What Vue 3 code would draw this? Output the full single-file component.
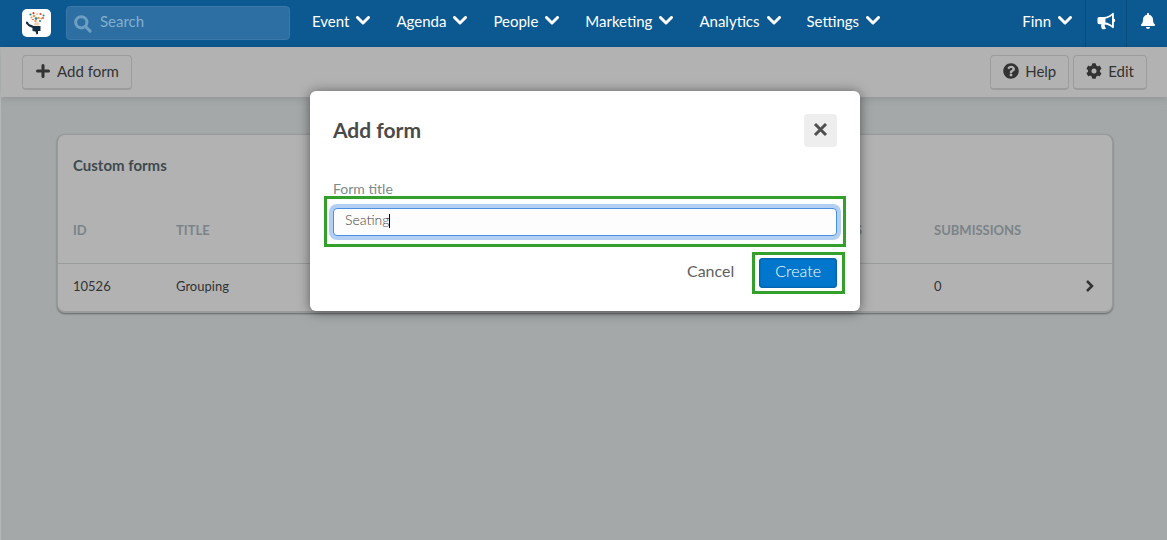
<script setup>
import { ref } from 'vue'

const menus = ['Event', 'Agenda', 'People', 'Marketing', 'Analytics', 'Settings']
const forms = [{ id: 10526, title: 'Grouping', questions: 4, submissions: 0 }]
const title = ref('Seating')
</script>

<template>
  <div class="page">
    <header class="topbar">
      <a class="logo" href="#" aria-label="Home">
        <svg viewBox="0 0 29 28">
          <path d="M10.500 17h8v5h-2.500v3l-1.500.5-1-3-3-.5z" fill="#142d40" />
          <path d="M4 12.500l2 .5 1 2 5 2v2.500l-5-2-3-3z" fill="#142d40" />
          <path d="M12 16.500v-2l3-1.500 2.500 1-.5 2.500z" fill="#ecd3b4" />
          <g fill="#ea9a50"><circle cx="12" cy="7" r="1.3" /><circle cx="16.500" cy="9" r="1.3" /><circle cx="13.500" cy="12" r="1.2" /><circle cx="19.500" cy="9.500" r="1.1" /><circle cx="9.500" cy="8.500" r="1" /><circle cx="15" cy="5" r=".8" /></g>
          <g fill="#1f8580"><circle cx="8.500" cy="5.500" r="1.1" /><circle cx="14" cy="9.500" r="1.3" /><circle cx="18" cy="12" r="1" /><circle cx="21.500" cy="6.500" r="1" /></g>
          <g fill="#d94333"><circle cx="11.500" cy="4.200" r="1.1" /><circle cx="18.500" cy="5" r="1.1" /><circle cx="21" cy="9" r=".9" /><circle cx="11" cy="10.500" r=".8" /></g>
        </svg>
      </a>
      <label class="search">
        <svg viewBox="0 0 18 18" aria-hidden="true"><circle cx="7.300" cy="7.300" r="5.600" /><path d="M11.500 11.500l4.600 4.600" /></svg>
        <input type="search" placeholder="Search" aria-label="Search" />
      </label>
      <nav class="menus">
        <button v-for="m in menus" :key="m" type="button" class="menu">
          {{ m }}
          <svg class="chev" viewBox="0 0 14 9"><path d="M1.5 1.5L7 7l5.5-5.5" /></svg>
        </button>
      </nav>
      <div class="account">
        <button type="button" class="menu user">
          Finn
          <svg class="chev" viewBox="0 0 14 9"><path d="M1.5 1.5L7 7l5.5-5.5" /></svg>
        </button>
        <button type="button" class="tool" aria-label="Announcements">
          <svg width="20" height="18" viewBox="0 0 18 16">
            <path fill="#fff" fill-rule="evenodd" d="M15.200.5c.6 0 .9.400.9 1v4.300c1.500.500 1.500 3 0 3.500v4.200c0 .6-.3 1-.9 1-2-1.900-4.500-3.100-7.100-3.400-.6.700-.2 1.400.1 1.900-.2.600.3 1.100.9 1.600-.8 1.100-2.900 1.200-3.900.4-.3-1.200-.9-2.400-.4-4H3.100C2 11 1.300 10.200 1.300 9.200V6.100C1.300 5 2 4.300 3.100 4.300h4c2.900 0 5.800-1.500 8.100-3.800zM14.400 3c-1.800 1.500-3.900 2.500-5.900 2.800v3.600c2.100.3 4.100 1.200 5.900 2.700z" />
          </svg>
        </button>
        <button type="button" class="tool" aria-label="Notifications">
          <svg width="14" height="16" viewBox="0 0 448 512"><path fill="#fff" d="M224 512c35 0 64-29 64-64H160c0 35 29 64 64 64zm215-150c-19-20-55-51-55-154 0-77-54-139-128-154V32c0-18-14-32-32-32s-32 14-32 32v22C118 69 64 131 64 208c0 103-36 134-55 154-6 7-9 14-9 22 0 16 13 32 32 32h384c19 0 32-16 32-32 0-8-3-15-9-22z" /></svg>
        </button>
      </div>
    </header>

    <main class="content">
      <div class="toolbar">
        <button type="button" class="btn">
          <svg width="16" height="16" viewBox="0 0 16 16"><path d="M8 2.500v11M2.500 8h11" stroke="#333" stroke-width="3" stroke-linecap="round" /></svg>
          Add form
        </button>
        <span class="spacer"></span>
        <button type="button" class="btn">
          <svg width="16" height="16" viewBox="0 0 512 512"><path fill="#333" d="M504 256c0 137-111 248-248 248S8 393 8 256C8 119 119 8 256 8s248 111 248 248zM263 90c-55 0-89 23-116 64-4 5-3 12 3 16l34 27c6 4 13 3 17-2 18-23 30-36 58-36 20 0 46 13 46 33 0 15-12 23-33 34-23 13-55 30-55 71v7c0 6 6 12 12 12h58c6 0 12-6 12-12v-1c0-29 84-30 84-109 0-58-61-104-120-104zm-7 248c-26 0-46 20-46 46s20 46 46 46 46-20 46-46-20-46-46-46z" /></svg>
          Help
        </button>
        <button type="button" class="btn">
          <svg width="16" height="16" viewBox="0 0 512 512"><path fill="#333" d="M487 316l-42-25c4-23 4-47 0-70l42-25c5-3 8-9 6-14-11-36-30-68-55-95-4-4-10-5-15-3l-43 25c-18-16-38-28-61-36V24c0-6-4-11-9-12-37-8-74-8-109 0-6 1-10 6-10 12v49c-22 8-43 20-61 36L88 84c-5-3-11-2-15 3-25 26-44 59-55 95-2 5 0 11 5 14l43 25c-5 23-5 47 0 70l-43 24c-5 3-7 9-5 15 11 35 30 68 55 95 4 4 10 5 15 2l42-24c18 15 39 27 61 35v49c0 6 4 11 10 12 37 8 74 8 109 0 5-1 9-6 9-12v-49c23-8 43-20 61-35l43 24c5 3 11 2 15-2 25-27 44-60 55-95 1-6-1-12-6-15zM256 336a80 80 0 1 1 0-160 80 80 0 0 1 0 160z" /></svg>
          Edit
        </button>
      </div>

      <section class="card">
        <h2>Custom forms</h2>
        <table>
          <thead>
            <tr>
              <th class="c-id">ID</th>
              <th>TITLE</th>
              <th class="c-questions">QUESTIONS</th>
              <th class="c-submissions">SUBMISSIONS</th>
              <th class="c-go"></th>
            </tr>
          </thead>
          <tbody>
            <tr v-for="f in forms" :key="f.id">
              <td>{{ f.id }}</td>
              <td>{{ f.title }}</td>
              <td>{{ f.questions }}</td>
              <td>{{ f.submissions }}</td>
              <td class="go"><svg width="9" height="12" viewBox="0 0 9 12"><path d="M2 1L7 6l-5 5" /></svg></td>
            </tr>
          </tbody>
        </table>
      </section>
    </main>

    <div class="overlay">
      <form class="modal" role="dialog" aria-labelledby="dialog-title" @submit.prevent>
        <div class="modal-head">
          <h1 id="dialog-title">Add form</h1>
          <button type="button" class="close" aria-label="Close">
            <svg width="15" height="15" viewBox="0 0 15 15"><path d="M2 2l11 11M13 2L2 13" /></svg>
          </button>
        </div>
        <label for="form-title">Form title</label>
        <div class="field marked">
          <input id="form-title" v-model="title" type="text" />
          <span class="caret"></span>
        </div>
        <div class="actions">
          <button type="button" class="cancel">Cancel</button>
          <span class="submit marked"><button type="submit" class="create">Create</button></span>
        </div>
      </form>
    </div>
  </div>
</template>

<style>
body {
  background: #a4a8a9;
}
</style>

<style scoped>
* {
  box-sizing: border-box;
}
.page {
  min-height: 100vh;
  display: flex;
  flex-direction: column;
  font-family: Lato, "Liberation Sans", sans-serif;
  font-size: 15px;
  color: #333;
}
button,
input {
  font: inherit;
  color: inherit;
}
button {
  border: 0;
  padding: 0;
  background: none;
  cursor: pointer;
}
svg {
  display: block;
  flex: none;
}
.topbar {
  height: 47px;
  display: flex;
  align-items: stretch;
  background: #0c5991;
  color: #fff;
  padding: 0 0 2px 22px;
}
.logo {
  align-self: center;
  width: 29px;
  height: 28px;
  border-radius: 5px;
  background: #fff;
}
.search {
  align-self: center;
  width: 224px;
  height: 34px;
  margin-left: 15px;
  padding: 0 7px;
  display: flex;
  align-items: center;
  gap: 8px;
  border: 1px solid #3b78a9;
  border-radius: 4px;
  background: #2d6fa2;
}
.search svg {
  width: 18px;
  height: 18px;
  margin-top: 2px;
  fill: none;
  stroke: #6f9fc3;
  stroke-width: 3;
  stroke-linecap: round;
}
.search input {
  flex: 1;
  min-width: 0;
  padding: 0 0 3px;
  border: 0;
  outline: 0;
  background: none;
}
.search input::placeholder {
  color: #84aece;
  opacity: 1;
}
.menus {
  display: flex;
  gap: 26px;
  margin-left: 22px;
}
.menu {
  display: flex;
  align-items: center;
  gap: 7px;
  padding-bottom: 4px;
}
.chev {
  width: 14px;
  height: 9px;
  fill: none;
  stroke: #fff;
  stroke-width: 3;
  stroke-linecap: round;
  stroke-linejoin: round;
}
.account {
  display: flex;
  margin: 0 -2px -2px auto;
}
.user {
  padding: 0 13px 6px 0;
}
.tool {
  width: 41px;
  display: flex;
  align-items: center;
  justify-content: center;
  padding-bottom: 5px;
  border-left: 1px solid #0a4c7c;
}
.tool:last-child {
  width: 43px;
}
.content {
  flex: 1;
  border-left: 1px solid #b5b8b9;
  background: #a4a8a9;
}
.toolbar {
  height: 50px;
  display: flex;
  align-items: center;
  gap: 4px;
  padding: 0 20px 0 21px;
  background: #b2b2b2;
  box-shadow: 0 1px 8px rgba(0, 0, 0, 0.14);
}
.spacer {
  flex: 1;
}
.btn {
  height: 35px;
  display: flex;
  align-items: center;
  gap: 6px;
  padding: 0 12px 2px;
  border: 1px solid #9c9c9c;
  border-bottom-width: 2px;
  border-radius: 4px;
}
.card {
  margin: 37px 54px 0 56px;
  border: 1px solid #989b9c;
  border-bottom: 2px solid #9a9c9c;
  border-radius: 8px;
  background: #b2b2b2;
  box-shadow: 0 1px 2px rgba(0, 0, 0, 0.4);
}
h2 {
  margin: 0;
  padding: 20px 15px 0;
  font-size: 15px;
  line-height: 20px;
  font-weight: 700;
  color: #3f4a50;
}
table {
  width: 100%;
  table-layout: fixed;
  border-collapse: collapse;
  margin-top: 21px;
  font-size: 13px;
}
th,
td {
  padding: 0 15px;
  text-align: left;
}
th {
  height: 67px;
  padding-top: 2px;
  color: #7a8488;
  font-weight: 700;
  border-bottom: 1px solid #999c9d;
}
td {
  height: 48px;
  padding-bottom: 2px;
}
.c-id {
  width: 103px;
}
.c-questions {
  width: 146px;
}
.c-submissions {
  width: 151px;
}
.c-go {
  width: 42px;
}
.go svg {
  fill: none;
  stroke: #333;
  stroke-width: 2.5;
}
.overlay {
  position: absolute;
  inset: 0;
  padding: 91px 0 0 3px;
}
.modal {
  max-width: 550px;
  margin: 0 auto;
  padding: 23px;
  border-radius: 6px;
  background: #fff;
  box-shadow: 0 1px 12px rgba(0, 0, 0, 0.5);
}
.modal-head {
  display: flex;
  justify-content: space-between;
  align-items: center;
  margin-bottom: 32px;
}
h1 {
  margin: 0;
  padding-bottom: 2px;
  font-size: 21px;
  font-weight: 700;
  color: #4a4a4a;
}
.close {
  width: 33px;
  height: 33px;
  display: flex;
  align-items: center;
  justify-content: center;
  padding-bottom: 2px;
  border-radius: 4px;
  background: #eee;
}
.close svg {
  stroke: #4f4f4f;
  stroke-width: 3;
}
.modal label {
  display: block;
  font-size: 14px;
  line-height: 20px;
  color: #7d8a8c;
}
.field {
  margin-top: 9px;
}
.marked {
  position: relative;
}
.marked::after {
  content: "";
  position: absolute;
  inset: -6px -8px -6px -7px;
  border: 3px solid #33a02c;
  pointer-events: none;
}
.field.marked::after {
  inset: -12px -9px -11px;
}
.field input {
  display: block;
  width: 100%;
  height: 28px;
  padding: 0 11px 5px;
  border: 1px solid #4a90e2;
  border-radius: 4px;
  outline: 0;
  background: #fdfdfd;
  box-shadow: 0 0 0 4px #b3d0f4;
  font-size: 14px;
  font-weight: 300;
  color: #444;
}
.caret {
  position: absolute;
  left: 56px;
  top: 6px;
  width: 1px;
  height: 14px;
  background: #000;
}
.actions {
  display: flex;
  justify-content: flex-end;
  align-items: center;
  gap: 25px;
  margin-top: 22px;
}
.cancel {
  padding-bottom: 5px;
  font-size: 16px;
  color: #606060;
}
.create {
  display: block;
  height: 30px;
  padding: 0 16px 5px;
  border-radius: 4px;
  background: #0077cc;
  box-shadow: inset 0 0 2px 1px #005fa8;
  color: #fff;
  font-size: 16px;
  font-weight: 300;
}
</style>
